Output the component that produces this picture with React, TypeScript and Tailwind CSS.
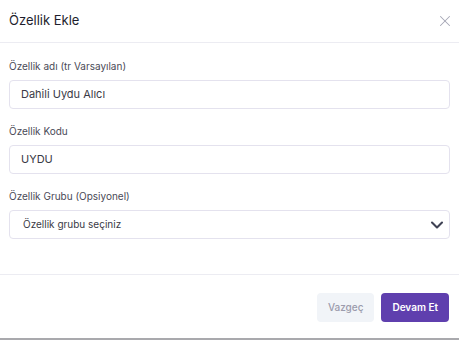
import { ChevronDown, X } from 'lucide-react'

export default function App() {
  return (
    <div className="h-[340px] w-[459px] bg-[#a9a9ad] font-['Inter',sans-serif]">
      <div className="flex h-[338px] flex-col bg-white">
        {/* Header */}
        <div className="flex h-[43px] items-center justify-between border-b border-[#ececf2] pl-[9px] pr-[5px]">
          <h2 className="text-[13px] font-normal text-[#1e1e2d]">Özellik Ekle</h2>
          <X className="h-[18px] w-[18px] text-[#a5a7b5]" strokeWidth={1.4} />
        </div>

        {/* Body */}
        <div className="flex flex-1 flex-col gap-[14px] px-[9px] pt-[15px]">
          <div>
            <label className="mb-[6px] block text-[10px] leading-[16px] text-[#4a4a57]">
              Özellik adı (tr Varsayılan)
            </label>
            <div className="flex h-[29px] items-center rounded-[4px] border border-[#e4e2ee] px-[11px] text-[11px] text-[#3a3a46]">
              Dahili Uydu Alıcı
            </div>
          </div>
          <div>
            <label className="mb-[6px] block text-[10px] leading-[16px] text-[#4a4a57]">Özellik Kodu</label>
            <div className="flex h-[29px] items-center rounded-[4px] border border-[#e4e2ee] px-[11px] text-[11px] text-[#3a3a46]">
              UYDU
            </div>
          </div>
          <div>
            <label className="mb-[6px] block text-[10px] leading-[16px] text-[#4a4a57]">
              Özellik Grubu (Opsiyonel)
            </label>
            <div className="flex h-[29px] items-center justify-between rounded-[4px] border border-[#e4e2ee] pl-[13px] pr-[2px] text-[10px] text-[#3a3a46]">
              <span>Özellik grubu seçiniz</span>
              <ChevronDown className="h-[20px] w-[20px] text-[#3f4254]" strokeWidth={2.5} />
            </div>
          </div>
        </div>

        {/* Footer */}
        <div className="flex h-[64px] items-start justify-end gap-[7px] border-t border-[#ececf2] px-[10px] pt-[18px]">
          <button className="h-[29px] rounded-[4px] bg-[#f1f4f8] px-[11px] text-[10px] font-medium text-[#9b9bac]">
            Vazgeç
          </button>
          <button className="h-[29px] rounded-[4px] bg-[#5f3fae] px-[11px] text-[10px] font-semibold text-white">
            Devam Et
          </button>
        </div>
      </div>
    </div>
  )
}
